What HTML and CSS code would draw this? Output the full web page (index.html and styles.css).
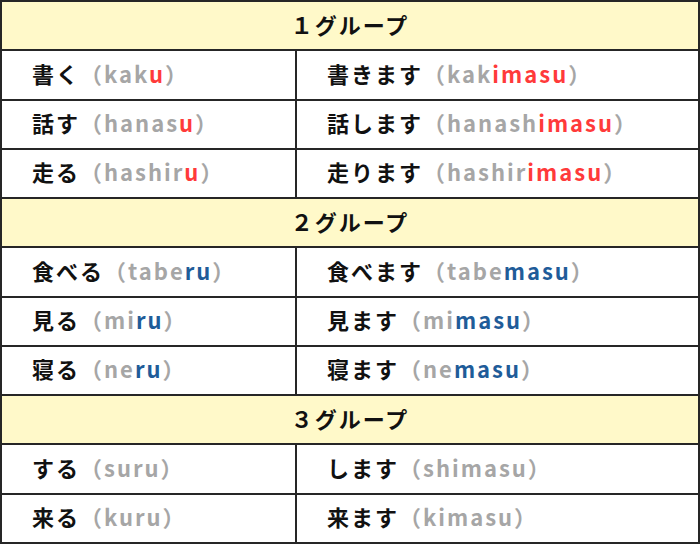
FILE: index.html
```html
<!DOCTYPE html>
<html lang="ja">
<head>
<meta charset="utf-8">
<link rel="stylesheet" href="styles.css">
</head>
<body>
<table class="verbs">
  <colgroup><col class="c1"><col class="c2"></colgroup>
  <tr class="group"><td colspan="2">１グループ</td></tr>
  <tr><td>書く<span class="r">（kak<span class="red">u</span>）</span></td><td>書きます<span class="r">（kak<span class="red">imasu</span>）</span></td></tr>
  <tr><td>話す<span class="r">（hanas<span class="red">u</span>）</span></td><td>話します<span class="r">（hanash<span class="red">imasu</span>）</span></td></tr>
  <tr><td>走る<span class="r">（hashir<span class="red">u</span>）</span></td><td>走ります<span class="r">（hashir<span class="red">imasu</span>）</span></td></tr>
  <tr class="group"><td colspan="2">２グループ</td></tr>
  <tr><td>食べる<span class="r">（tabe<span class="blue">ru</span>）</span></td><td>食べます<span class="r">（tabe<span class="blue">masu</span>）</span></td></tr>
  <tr><td>見る<span class="r">（mi<span class="blue">ru</span>）</span></td><td>見ます<span class="r">（mi<span class="blue">masu</span>）</span></td></tr>
  <tr><td>寝る<span class="r">（ne<span class="blue">ru</span>）</span></td><td>寝ます<span class="r">（ne<span class="blue">masu</span>）</span></td></tr>
  <tr class="group"><td colspan="2">３グループ</td></tr>
  <tr><td>する<span class="r">（suru）</span></td><td>します<span class="r">（shimasu）</span></td></tr>
  <tr><td>来る<span class="r">（kuru）</span></td><td>来ます<span class="r">（kimasu）</span></td></tr>
</table>
</body>
</html>
```
FILE: styles.css
```css
html, body {
  margin: 0;
  padding: 0;
  background: #ffffff;
}
.verbs {
  width: 700px;
  height: 544px;
  border-collapse: collapse;
  table-layout: fixed;
  font-family: "Noto Sans CJK JP", "Noto Sans", sans-serif;
  font-weight: 700;
  font-size: 22px;
  color: #111111;
}
.c1 { width: 295px; }
.verbs td {
  border: 2px solid #262626;
  padding: 0 0 4px 30px;
  height: 43px;
  vertical-align: middle;
  white-space: nowrap;
  letter-spacing: 2px;
}
.verbs .group td {
  background: #fff9c9;
  text-align: center;
  padding: 0 0 4px 0;
}
.r {
  color: #a6a6a6;
  font-weight: 700;
}
.red { color: #ff3a3a; }
.blue { color: #1f5c99; }
```
